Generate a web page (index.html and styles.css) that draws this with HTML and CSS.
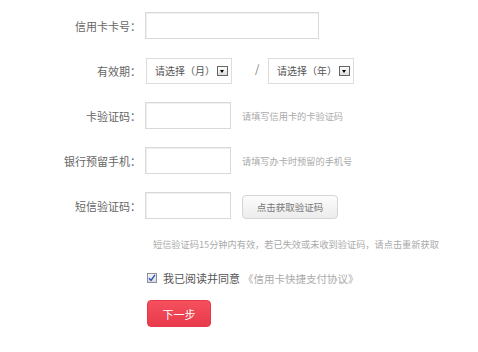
FILE: index.html
```html
<!DOCTYPE html>
<html lang="zh-CN">
<head>
  <meta charset="UTF-8">
  <title>信用卡快捷支付</title>
  <link rel="stylesheet" href="styles.css">
</head>
<body>
  <form class="pay-form">
    <div class="row">
      <label class="label">信用卡卡号：</label>
      <input class="field field-long" type="text">
    </div>

    <div class="row">
      <label class="label">有效期：</label>
      <div class="select">请选择（月）<span class="arrow"></span></div>
      <span class="slash">/</span>
      <div class="select">请选择（年）<span class="arrow"></span></div>
    </div>

    <div class="row">
      <label class="label">卡验证码：</label>
      <input class="field field-short" type="text">
      <span class="hint">请填写信用卡的卡验证码</span>
    </div>

    <div class="row">
      <label class="label">银行预留手机：</label>
      <input class="field field-short" type="text">
      <span class="hint">请填写办卡时预留的手机号</span>
    </div>

    <div class="row">
      <label class="label">短信验证码：</label>
      <input class="field field-short" type="text">
      <button class="code-button" type="button">点击获取验证码</button>
    </div>

    <p class="note">短信验证码15分钟内有效，若已失效或未收到验证码，请点击重新获取</p>

    <div class="agree">
      <span class="check">
        <svg width="8" height="8" viewBox="0 0 8 8"><path d="M1 4.2 L3 6.4 L7 0.8" fill="none" stroke="#2a52be" stroke-width="1.4"/></svg>
      </span>
      <span>我已阅读并同意</span>
      <a class="protocol" href="#">《信用卡快捷支付协议》</a>
    </div>

    <button class="next-button" type="button">下一步</button>
  </form>
</body>
</html>
```

FILE: styles.css
```css
body {
  margin: 0;
  background-color: white;
  font-family: "Noto Sans CJK SC", "Microsoft YaHei", sans-serif;
  color: #555;
}
.pay-form {
  padding-top: 12px;
}
.row {
  display: flex;
  align-items: center;
  height: 27px;
  margin-bottom: 18px;
}
.label {
  width: 141px;
  text-align: right;
  font-size: 11px;
  color: #666;
  margin-right: 4px;
}
.field {
  box-sizing: border-box;
  height: 27px;
  border: 1px solid #d9d9d9;
  box-shadow: inset 1px 1px 0 #f0f0f0;
  padding: 0 4px;
  outline: none;
}
.field-long {
  width: 174px;
}
.field-short {
  width: 86px;
}
.select {
  box-sizing: border-box;
  width: 86px;
  height: 26px;
  margin-left: 1px;
  border: 1px solid #ddd;
  display: flex;
  align-items: center;
  padding-left: 8px;
  font-size: 10px;
  color: #555;
}
.arrow {
  box-sizing: border-box;
  width: 11px;
  height: 10px;
  margin-left: 2px;
  border: 1px solid #666;
  background: linear-gradient(#fff, #ddd);
  position: relative;
}
.arrow::after {
  content: "";
  position: absolute;
  left: 2px;
  top: 3px;
  border-left: 2.5px solid transparent;
  border-right: 2.5px solid transparent;
  border-top: 3px solid #000;
}
.slash {
  box-sizing: border-box;
  width: 35px;
  padding-left: 23px;
  font-size: 11px;
  color: #777;
  margin-top: -6px;
}
.hint {
  margin-left: 11px;
  font-size: 9.2px;
  color: #aaa;
}
.code-button {
  margin-left: 11px;
  margin-top: 3px;
  width: 96px;
  height: 24px;
  border: 1px solid #d5d5d5;
  border-radius: 4px;
  background: linear-gradient(#fcfcfc, #ececec);
  font-family: inherit;
  font-size: 9.5px;
  color: #777;
}
.note {
  margin: 0 0 0 153px;
  font-size: 9.2px;
  color: #aaa;
}
.agree {
  display: flex;
  align-items: center;
  margin: 19px 0 0 147px;
  font-size: 11px;
  color: #555;
}
.check {
  box-sizing: border-box;
  width: 10px;
  height: 10px;
  margin-right: 6px;
  border: 1px solid #8f8f9d;
  background: linear-gradient(#f4f4f4, #dcdcdc);
  display: flex;
  align-items: center;
  justify-content: center;
}
.protocol {
  margin-left: 3px;
  color: #aaa;
  font-size: 10.5px;
  text-decoration: none;
}
.next-button {
  display: block;
  margin: 14px 0 0 147px;
  width: 64px;
  height: 27px;
  border: 1px solid #e6394a;
  border-radius: 4px;
  background: linear-gradient(#f5505e, #e83a4b);
  color: white;
  font-family: inherit;
  font-size: 11px;
  cursor: pointer;
}
```
